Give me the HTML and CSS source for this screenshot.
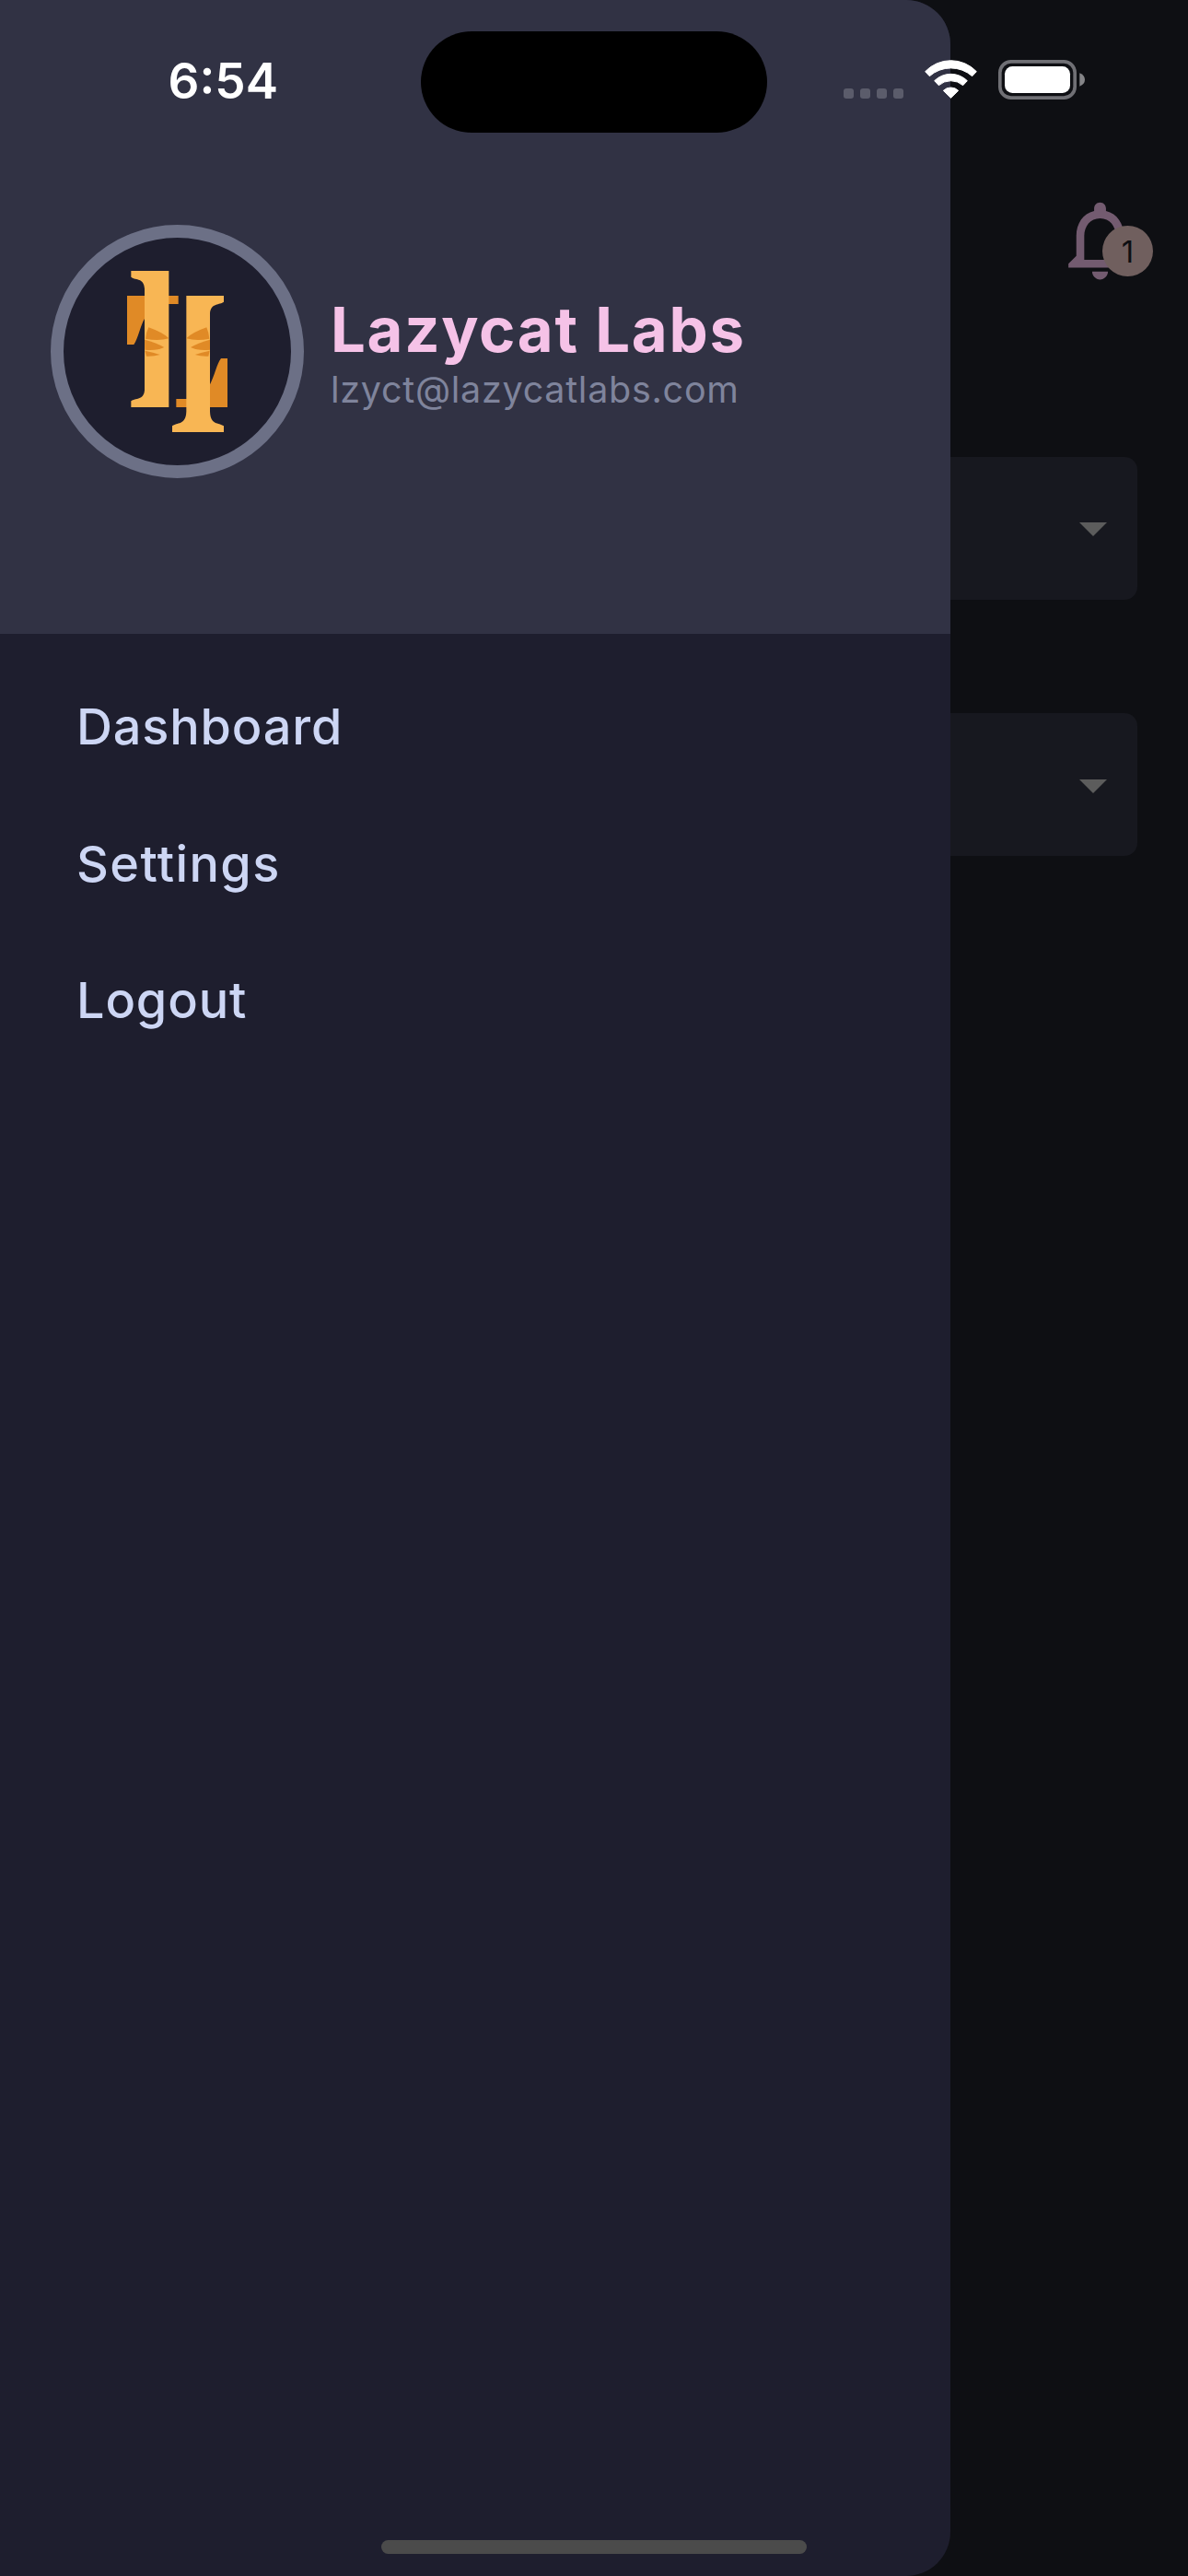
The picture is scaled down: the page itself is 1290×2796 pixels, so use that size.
FILE: index.html
```html
<!DOCTYPE html>
<html lang="en">
<head>
<meta charset="utf-8">
<title>Lazycat Labs</title>
<link rel="stylesheet" href="styles.css">
</head>
<body>
<div class="screen">
  <main class="page">
    <header class="app-bar">
      <div class="bell">
        <svg class="bell-icon" viewBox="0 0 24 24" aria-hidden="true"><path d="M12 22c1.1 0 2-.9 2-2h-4c0 1.1.9 2 2 2zm6-6v-5c0-3.07-1.63-5.64-4.5-6.32V4c0-.83-.67-1.5-1.5-1.5s-1.5.67-1.5 1.5v.68C7.64 5.36 6 7.92 6 11v5l-2 2v1h16v-1l-2-2zm-2 1H8v-6c0-2.48 1.51-4.5 4-4.5s4 2.02 4 4.5v6z"/></svg>
        <span class="bell-badge">1</span>
      </div>
    </header>
    <div class="fields">
      <div class="select"><svg class="caret" viewBox="0 0 30 15"><path d="M0 0h30L15 15z"/></svg></div>
      <div class="select"><svg class="caret" viewBox="0 0 30 15"><path d="M0 0h30L15 15z"/></svg></div>
    </div>
  </main>

  <aside class="drawer">
    <div class="drawer-header">
      <div class="avatar">
        <svg class="logo" viewBox="0 0 420 600" aria-hidden="true">
          <g class="logo-dark">
            <path d="M54 123H221V150H111V198C98 218 90 262 76 282H54z"/>
            <path d="M381 486H214V459H324V412C338 386 346 345 360 327H381z"/>
          </g>
          <g class="logo-light">
            <path d="M67 42H190V486H67V466C80 456 109 464 111 430V100C109 64 84 74 67 62z"/>
            <path d="M247 123H369V143C356 153 327 146 324 180V500C326 546 352 534 369 547V567H201V547C216 534 245 546 247 500z"/>
          </g>
          <g class="logo-dark">
            <path d="M124 226Q172 243 190 262Q155 272 114 263Q116 242 124 226z"/>
            <path d="M111 266Q150 276 175 291Q150 303 112 299z"/>
            <path d="M112 302Q140 307 161 315Q140 321 117 320z"/>
            <path d="M313 226Q265 243 247 262Q282 272 322 263Q320 242 313 226z"/>
            <path d="M324 266Q286 276 261 291Q286 303 324 299z"/>
            <path d="M323 302Q296 307 275 315Q296 321 319 320z"/>
          </g>
        </svg>
      </div>
      <div class="account">
        <div class="account-name">Lazycat Labs</div>
        <div class="account-email">lzyct@lazycatlabs.com</div>
      </div>
    </div>
    <nav class="menu">
      <a class="menu-item">Dashboard</a>
      <a class="menu-item menu-item-wide">Settings</a>
      <a class="menu-item">Logout</a>
    </nav>
  </aside>

  <div class="status-bar">
    <span class="time">6:54</span>
    <span class="island"></span>
    <span class="signal"><i></i><i></i><i></i><i></i></span>
    <svg class="wifi" viewBox="42 45 171 126" aria-hidden="true">
      <path d="M44 83A115 115 0 0 1 211 83L197 98A105 105 0 0 0 58 98z"/>
      <path d="M74 113A76 76 0 0 1 181 113L167 128A60 60 0 0 0 88 128z"/>
      <path d="M103 145A35 35 0 0 1 152 145L127.500 169z"/>
    </svg>
    <svg class="battery" viewBox="282 45 282 129" aria-hidden="true">
      <rect class="battery-case" x="287.500" y="50.500" width="244" height="118" rx="36"/>
      <rect class="battery-fill" x="303" y="66" width="213" height="87" rx="25"/>
      <path class="battery-tip" d="M547 88Q564 95 564 109.500T547 131z"/>
    </svg>
  </div>
  <div class="home-indicator"></div>
</div>
</body>
</html>
```

FILE: styles.css
```css
* { box-sizing: border-box; }

body {
  margin: 0;
  background: #0e0f13;
  font-family: Inter, "Liberation Sans", sans-serif;
}

.screen {
  position: relative;
  width: 1290px;
  height: 2796px;
  overflow: hidden;
}

/* Page under the drawer */
.page { height: 100%; background: #0e0f13; }

.app-bar {
  display: flex;
  justify-content: flex-end;
  height: 496px;
  padding: 209px 44px 0 0;
}

.bell { position: relative; width: 103px; height: 103px; }
.bell-icon { display: block; width: 103px; height: 103px; fill: #735b70; }

.bell-badge {
  position: absolute;
  left: 54px;
  top: 36px;
  width: 55px;
  height: 55px;
  border-radius: 50%;
  background: #705f5e;
  color: #0e0f13;
  font-size: 33px;
  font-weight: 400;
  line-height: 57px;
  text-align: center;
}

.fields {
  display: flex;
  flex-direction: column;
  gap: 123px;
  padding: 0 55px;
}

.select {
  display: flex;
  align-items: center;
  justify-content: flex-end;
  height: 155px;
  padding: 2px 33px 0 0;
  border-radius: 14px;
  background: #17181f;
}

.select + .select { padding-top: 4px; }

.caret { width: 30px; height: 15px; fill: #5c5c5c; }

/* Drawer */
.drawer {
  position: absolute;
  inset: 0 auto 0 0;
  width: 1032px;
  overflow: hidden;
  border-radius: 0 48px 48px 0;
  background: #1e1e2e;
}

.drawer-header {
  display: flex;
  align-items: flex-start;
  gap: 29px;
  height: 688px;
  padding: 244px 0 0 55px;
  background: #313244;
}

.avatar {
  display: flex;
  width: 275px;
  height: 275px;
  padding: 22px 0 0 51px;
  border: 14px solid #6c7086;
  border-radius: 50%;
  background: #1e1e2e;
}

.logo { width: 140px; height: 200px; }
.logo-light { fill: #f8b654; }
.logo-dark { fill: #e08a26; }

.account { padding-top: 74px; white-space: nowrap; }

.account-name {
  color: #f5c2e7;
  font-size: 67px;
  font-weight: 700;
  line-height: 80px;
  letter-spacing: 1.700px;
}

.account-email {
  color: #7f849c;
  font-size: 39.500px;
  font-weight: 400;
  line-height: 50px;
  letter-spacing: 0.720px;
}

.menu { display: flex; flex-direction: column; padding: 26px 83px; }

.menu-item {
  height: 148.500px;
  color: #cdd6f4;
  font-size: 54px;
  font-weight: 500;
  line-height: 149px;
  letter-spacing: 0.850px;
}

.menu-item-wide { letter-spacing: 1.400px; }

/* System overlays */
.status-bar {
  position: absolute;
  inset: 0 0 auto 0;
  display: flex;
  align-items: flex-start;
  padding: 34px 0 0 182.500px;
}

.time {
  width: 274.500px;
  padding-top: 22px;
  color: #fff;
  font-size: 53px;
  font-weight: 600;
  line-height: 64px;
}

.island { width: 376px; height: 110px; border-radius: 55px; background: #000; }

.signal { display: flex; gap: 7px; margin: 62px 23px 0 83px; }
.signal i { width: 11px; height: 11px; border-radius: 3px; background: #5b5c6b; }

.wifi { width: 57px; height: 42px; margin-top: 31px; fill: #fff; stroke: #fff; stroke-width: 3; stroke-linejoin: round; }

.battery { width: 94px; height: 43px; margin: 31px 0 0 23px; }
.battery-case { fill: none; stroke: #707075; stroke-width: 11; }
.battery-fill { fill: #fff; }
.battery-tip { fill: #858588; }

.home-indicator {
  position: absolute;
  left: 414px;
  top: 2757px;
  width: 462px;
  height: 15px;
  border-radius: 8px;
  background: #4b4b4b;
}
```
